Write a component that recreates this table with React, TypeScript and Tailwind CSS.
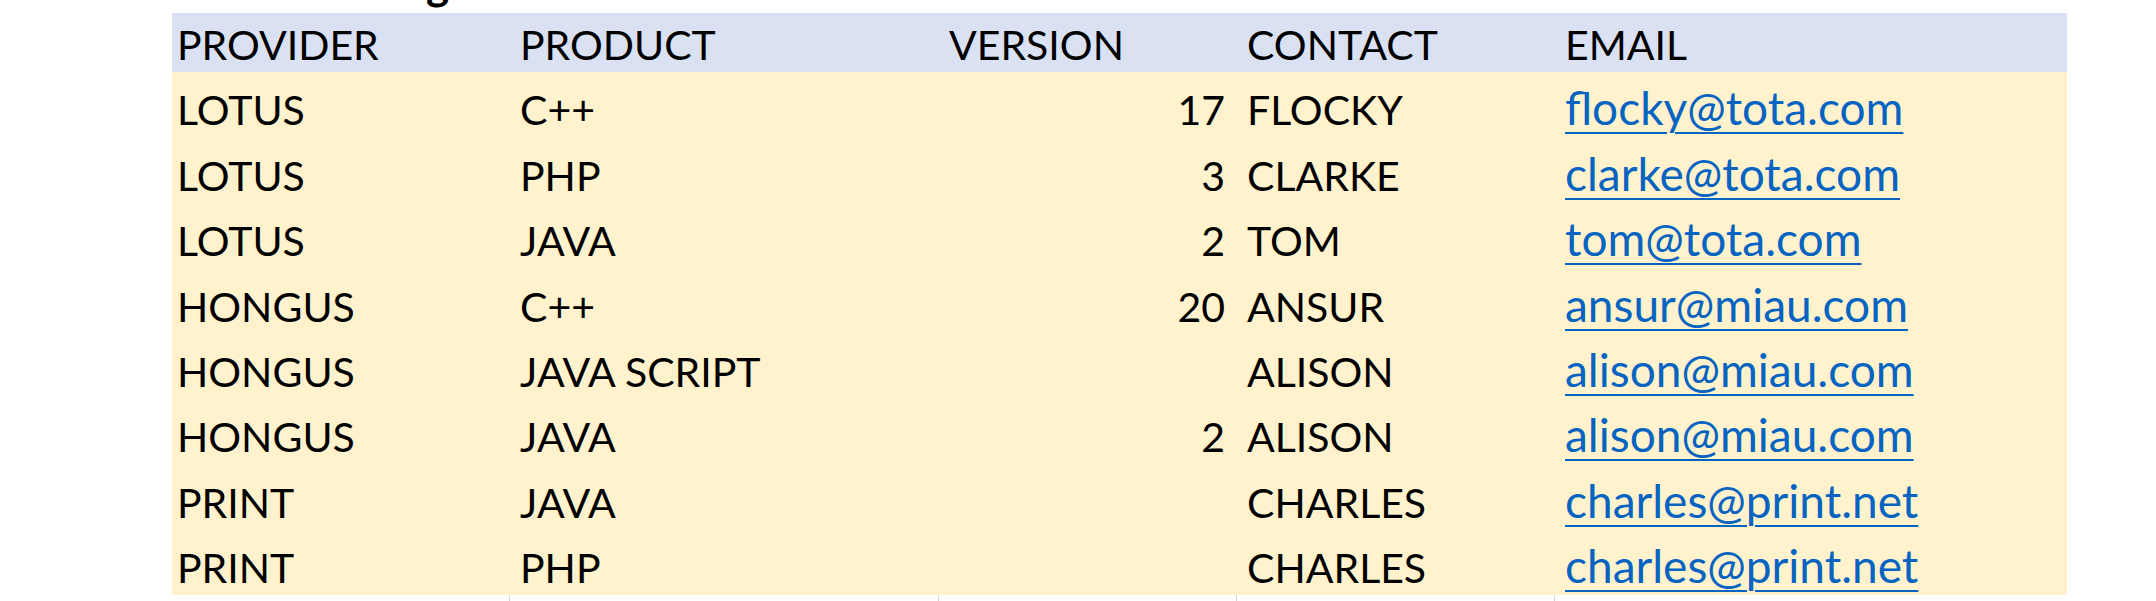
import React from "react";

type Row = { provider: string; product: string; version: string; contact: string; email: string };

const rows: Row[] = [
  { provider: "LOTUS", product: "C++", version: "17", contact: "FLOCKY", email: "flocky@tota.com" },
  { provider: "LOTUS", product: "PHP", version: "3", contact: "CLARKE", email: "clarke@tota.com" },
  { provider: "LOTUS", product: "JAVA", version: "2", contact: "TOM", email: "tom@tota.com" },
  { provider: "HONGUS", product: "C++", version: "20", contact: "ANSUR", email: "ansur@miau.com" },
  { provider: "HONGUS", product: "JAVA SCRIPT", version: "", contact: "ALISON", email: "alison@miau.com" },
  { provider: "HONGUS", product: "JAVA", version: "2", contact: "ALISON", email: "alison@miau.com" },
  { provider: "PRINT", product: "JAVA", version: "", contact: "CHARLES", email: "charles@print.net" },
  { provider: "PRINT", product: "PHP", version: "", contact: "CHARLES", email: "charles@print.net" },
];

const grid = "grid grid-cols-[337px_429px_298px_318px_513px]";
const cell = "flex items-end pb-[7px] text-[41px] leading-none whitespace-nowrap";

export default function App() {
  return (
    <div
      className="w-[2156px] h-[601px] bg-white overflow-hidden text-black"
      style={{ fontFamily: "Lato, 'Open Sans', sans-serif" }}
    >
      {/* clipped title above the table: only a descender is visible */}
      <div className="h-[13px] overflow-hidden pl-[426px]">
        <div className="-mt-[39px] text-[44px] leading-none font-bold">g</div>
      </div>

      <div className="ml-[172px] w-[1895px]">
        <div className={`${grid} h-[59px] bg-[#D9E1F2]`}>
          <div className={`${cell} pl-[5px]`}>PROVIDER</div>
          <div className={`${cell} pl-[11px]`}>PRODUCT</div>
          <div className={`${cell} pl-[11px]`}>VERSION</div>
          <div className={`${cell} pl-[11px]`}>CONTACT</div>
          <div className={`${cell} pl-[11px]`}>EMAIL</div>
        </div>
        <div className="bg-[#FFF2CC]">
          {rows.map((r, i) => (
            <div key={i} className={`${grid} h-[65.375px]`}>
              <div className={`${cell} pl-[5px]`}>{r.provider}</div>
              <div className={`${cell} pl-[11px]`}>{r.product}</div>
              <div className={`${cell} justify-end pr-[11px]`}>{r.version}</div>
              <div className={`${cell} pl-[11px]`}>{r.contact}</div>
              <div className="flex items-end pl-[11px] pb-[6px] text-[46px] leading-none">
                <a
                  href={`mailto:${r.email}`}
                  className="text-[#0563C1] underline decoration-2 underline-offset-[7px]"
                >
                  {r.email}
                </a>
              </div>
            </div>
          ))}
        </div>
        <div className={`${grid} h-[6px]`}>
          <div />
          <div className="border-l border-[#d4d4d4]" />
          <div className="border-l border-[#d4d4d4]" />
          <div className="border-l border-[#d4d4d4]" />
          <div className="border-l border-[#d4d4d4]" />
        </div>
      </div>
    </div>
  );
}
